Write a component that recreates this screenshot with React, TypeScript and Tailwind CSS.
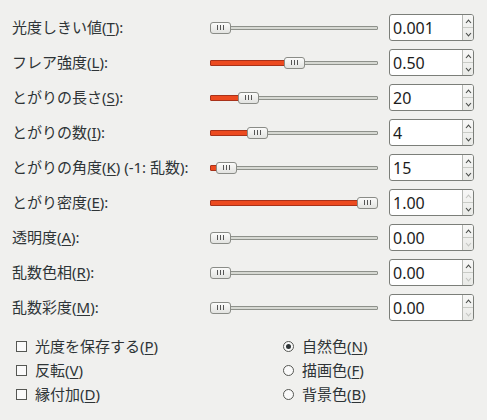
import React from 'react';

type Row = {
  label: string;
  key: string;
  suffix?: string;
  value: string;
  handle: number; // handle left offset in px within the track
  upOff?: boolean;
  downOff?: boolean;
};

const rows: Row[] = [
  { label: '光度しきい値(', key: 'T', value: '0.001', handle: 0 },
  { label: 'フレア強度(', key: 'L', value: '0.50', handle: 74 },
  { label: 'とがりの長さ(', key: 'S', value: '20', handle: 28 },
  { label: 'とがりの数(', key: 'I', value: '4', handle: 37 },
  { label: 'とがりの角度(', key: 'K', suffix: ') (-1: 乱数):', value: '15', handle: 6 },
  { label: 'とがり密度(', key: 'E', value: '1.00', handle: 147, upOff: true },
  { label: '透明度(', key: 'A', value: '0.00', handle: 0, downOff: true },
  { label: '乱数色相(', key: 'R', value: '0.00', handle: 0, downOff: true },
  { label: '乱数彩度(', key: 'M', value: '0.00', handle: 0, downOff: true },
];

const font = { fontFamily: '"Noto Sans", "Noto Sans CJK JP", sans-serif' };

function Slider({ handle }: { handle: number }) {
  return (
    <div className="relative h-[14px] w-[168px]">
      <div className="absolute left-0 right-0 top-[5px] h-[4px] rounded-[1px] border border-[#8e918b] bg-[#d6d8d2]" />
      {handle > 0 && (
        <div
          className="absolute left-0 top-[4px] h-[6px] rounded-[1px] border border-[#a8321a] bg-[#ec4a1f]"
          style={{ width: handle + 6 }}
        />
      )}
      {handle === 0 && (
        <div className="absolute left-0 top-[4px] h-[6px] w-[3px] rounded-[1px] bg-[#c8401e]" />
      )}
      <div
        className="absolute top-[1px] flex h-[12px] w-[21px] items-center justify-center gap-[2px] rounded-[3px] border border-[#8a8c87] bg-gradient-to-b from-[#fbfbfa] to-[#e2e3e0]"
        style={{ left: handle }}
      >
        <span className="h-[5px] w-px bg-[#555]" />
        <span className="h-[5px] w-px bg-[#555]" />
        <span className="h-[5px] w-px bg-[#555]" />
      </div>
    </div>
  );
}

function Chevron({ up, off }: { up: boolean; off?: boolean }) {
  return (
    <svg width="7" height="5" viewBox="0 0 7 5">
      <path
        d={up ? 'M1 4 L3.5 1.2 L6 4' : 'M1 1 L3.5 3.8 L6 1'}
        fill="none"
        stroke={off ? '#c4c6c2' : '#4a4d4a'}
        strokeWidth="1.1"
      />
    </svg>
  );
}

function SpinBox({ value, upOff, downOff }: { value: string; upOff?: boolean; downOff?: boolean }) {
  return (
    <div className="flex h-[27px] w-[85px] overflow-hidden rounded-[3px] border border-[#7b7e79] bg-white">
      <div className="flex flex-1 items-center pl-[3px] text-[16px] leading-none text-[#1c1c1c]">
        {value}
      </div>
      <div className="flex w-[11px] flex-col border-l border-[#b5b7b3] bg-gradient-to-b from-[#f7f7f6] to-[#e9eae7]">
        <div className="flex flex-1 items-center justify-center border-b border-[#c9cbc6]">
          <Chevron up off={upOff} />
        </div>
        <div className="flex flex-1 items-center justify-center">
          <Chevron up={false} off={downOff} />
        </div>
      </div>
    </div>
  );
}

function Key({ k }: { k: string }) {
  return <span className="underline decoration-1 underline-offset-2">{k}</span>;
}

export default function App() {
  return (
    <div className="h-[420px] w-[487px] bg-[#f0f0ee] text-[#2e3436]" style={font}>
      <div className="flex flex-col gap-[8px] pt-[14px]">
        {rows.map((r, i) => (
          <div key={i} className="flex h-[27px] items-center">
            <div className="w-[210px] pl-[12px] text-[15px] whitespace-nowrap">
              {r.label}
              <Key k={r.key} />
              {r.suffix ?? '):'}
            </div>
            <Slider handle={r.handle} />
            <div className="ml-[11px]">
              <SpinBox value={r.value} upOff={r.upOff} downOff={r.downOff} />
            </div>
          </div>
        ))}
      </div>

      <div className="mt-[16px] flex text-[15px]">
        <div className="flex w-[283px] flex-col gap-[5px] pl-[16px]">
          {[
            ['光度を保存する(', 'P'],
            ['反転(', 'V'],
            ['縁付加(', 'D'],
          ].map(([t, k]) => (
            <div key={k} className="flex h-[19px] items-center gap-[8px]">
              <span className="h-[11px] w-[11px] border border-[#555753] bg-[#fafafa]" />
              <span>
                {t}
                <Key k={k} />)
              </span>
            </div>
          ))}
        </div>
        <div className="flex flex-col gap-[5px]">
          {[
            ['自然色(', 'N', true],
            ['描画色(', 'F', false],
            ['背景色(', 'B', false],
          ].map(([t, k, on]) => (
            <div key={k as string} className="flex h-[19px] items-center gap-[8px]">
              <span className="flex h-[11px] w-[11px] items-center justify-center rounded-full border border-[#555753] bg-[#fafafa]">
                {on && <span className="h-[5px] w-[5px] rounded-full bg-[#2e3436]" />}
              </span>
              <span>
                {t as string}
                <Key k={k as string} />)
              </span>
            </div>
          ))}
        </div>
      </div>
    </div>
  );
}
